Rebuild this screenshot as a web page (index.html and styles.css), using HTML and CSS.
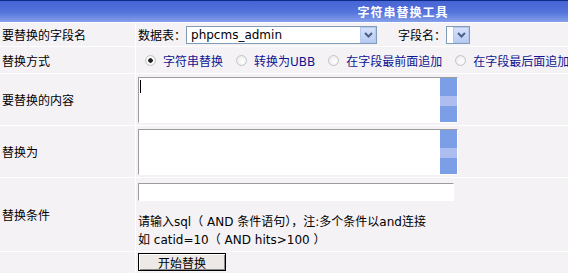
FILE: index.html
```html
<!DOCTYPE html>
<html lang="zh-CN">
<head>
  <meta charset="UTF-8">
  <title>字符串替换工具</title>
  <link rel="stylesheet" href="styles.css">
</head>
<body>
  <table class="form">
    <colgroup><col class="col-label"><col></colgroup>
    <tr>
      <th colspan="2" class="title">字符串替换工具</th>
    </tr>
    <tr class="row-field">
      <td class="label">要替换的字段名</td>
      <td class="value">
        <div class="line">
          数据表：<div class="select select-table"><span>phpcms_admin</span><i class="arrow"><svg width="9" height="6" viewBox="0 0 9 6"><path d="M1 1 L4.5 4.5 L8 1" fill="none" stroke="#4d6185" stroke-width="2"/></svg></i></div>
          <span class="field-name">字段名：</span><div class="select select-field"><span></span><i class="arrow"><svg width="9" height="6" viewBox="0 0 9 6"><path d="M1 1 L4.5 4.5 L8 1" fill="none" stroke="#4d6185" stroke-width="2"/></svg></i></div>
        </div>
      </td>
    </tr>
    <tr class="row-mode">
      <td class="label">替换方式</td>
      <td class="value">
        <div class="radios">
          <label class="opt"><i class="radio checked"></i>字符串替换</label>
          <label class="opt"><i class="radio"></i>转换为UBB</label>
          <label class="opt"><i class="radio"></i>在字段最前面追加</label>
          <label class="opt"><i class="radio"></i>在字段最后面追加</label>
        </div>
      </td>
    </tr>
    <tr class="row-area">
      <td class="label">要替换的内容</td>
      <td class="value">
        <div class="area"><textarea></textarea><i class="caret"></i><div class="scroll"><i></i><i class="thumb"></i><i></i></div></div>
      </td>
    </tr>
    <tr class="row-area">
      <td class="label">替换为</td>
      <td class="value">
        <div class="area"><textarea></textarea><div class="scroll"><i></i><i class="thumb"></i><i></i></div></div>
      </td>
    </tr>
    <tr class="row-where">
      <td class="label">替换条件</td>
      <td class="value top">
        <input class="text" type="text">
        <p class="hint">请输入sql（ AND 条件语句），注:多个条件以and连接</p>
        <p class="hint">如 catid=10（ AND hits&gt;100 ）</p>
      </td>
    </tr>
    <tr class="row-submit">
      <td class="label"></td>
      <td class="value top"><button class="btn" type="button">开始替换</button></td>
    </tr>
  </table>
</body>
</html>
```

FILE: styles.css
```css
body {
  margin: 0;
  overflow: hidden;
  font-family: "DejaVu Sans", "Noto Sans CJK SC", sans-serif;
  font-size: 12px;
  color: #000;
  background: #fff;
}
.form {
  width: 808px;
  margin: -1px 0 0 -1px;
  border-spacing: 1px;
  table-layout: fixed;
  background: #fff;
}
.col-label {
  width: 135px;
}
.form td,
.form th {
  box-sizing: border-box;
  padding: 0 0 0 2px;
  background: #f5f2f6;
  vertical-align: middle;
  white-space: nowrap;
}
.form th.title {
  height: 22px;
  padding: 0;
  border-top: 1px solid #0c2a86;
  background: linear-gradient(#4764d4, #5574dc 55%, #86a0ea);
  color: #fff;
  font-weight: bold;
  letter-spacing: 1px;
  text-align: center;
}
.form td.top {
  vertical-align: top;
}
.row-field td { height: 23px; }
.row-mode td { height: 26px; }
.row-area td { height: 51px; }
.row-where td { height: 73px; }
.row-where td.top { padding-top: 5px; }
.row-submit td { height: 24px; }
.row-submit td.top { padding-top: 1px; }

.line {
  display: flex;
  align-items: center;
}
.select {
  display: inline-flex;
  box-sizing: border-box;
  height: 18px;
  border: 1px solid #7f9db9;
  background: #fff;
}
.select span {
  flex: 1;
  padding-left: 4px;
  line-height: 16px;
}
.select-table { width: 191px; }
.select-field { width: 24px; }
.field-name {
  margin-left: 21px;
}
.arrow {
  display: flex;
  align-items: center;
  justify-content: center;
  box-sizing: border-box;
  width: 16px;
  height: 16px;
  border: 1px solid #b7c8f0;
  background: linear-gradient(#d6e1fb, #b9cbf5);
}

.radios {
  display: flex;
  align-items: center;
  color: #10168e;
}
.opt {
  display: flex;
  align-items: center;
  margin-right: 6px;
}
.radio {
  box-sizing: border-box;
  width: 11px;
  height: 11px;
  margin: 0 7px;
  border: 1px solid #c4c4c4;
  border-radius: 50%;
  background: radial-gradient(circle at 60% 60%, #fff, #e6e6e6);
}
.radio.checked {
  background: radial-gradient(circle, #222 0 2px, #fff 2.5px, #e6e6e6);
}

.area {
  position: relative;
  display: flex;
  box-sizing: border-box;
  width: 320px;
  height: 46px;
  border: 1px solid;
  border-color: #9c9c9c #fff #fff #9c9c9c;
  background: #fff;
}
.area textarea {
  flex: 1;
  border: 0;
  margin: 0;
  padding: 1px;
  resize: none;
  outline: none;
  font: inherit;
}
.caret {
  position: absolute;
  left: 1px;
  top: 2px;
  width: 1px;
  height: 13px;
  background: #000;
}
.scroll {
  display: flex;
  flex-direction: column;
  width: 17px;
}
.scroll i {
  height: 18px;
  background: #7b9ee6;
}
.scroll i.thumb {
  height: 10px;
  background: #adbdef;
}
.scroll i:last-child {
  flex: 1;
}

.text {
  display: block;
  box-sizing: border-box;
  width: 316px;
  height: 18px;
  margin: 0 0 12px;
  padding: 0 2px;
  border: 1px solid;
  border-color: #9c9c9c #fff #fff #9c9c9c;
  background: #fff;
  font: inherit;
  outline: none;
}
.hint {
  margin: 0;
  line-height: 18px;
}
.btn {
  box-sizing: border-box;
  width: 88px;
  height: 18px;
  padding: 0;
  border: 1px solid #000;
  background: #ece9e6;
  box-shadow: inset 1px 1px #fff, inset -1px -1px #8a8a8a;
  font: inherit;
  color: #000;
}
```
